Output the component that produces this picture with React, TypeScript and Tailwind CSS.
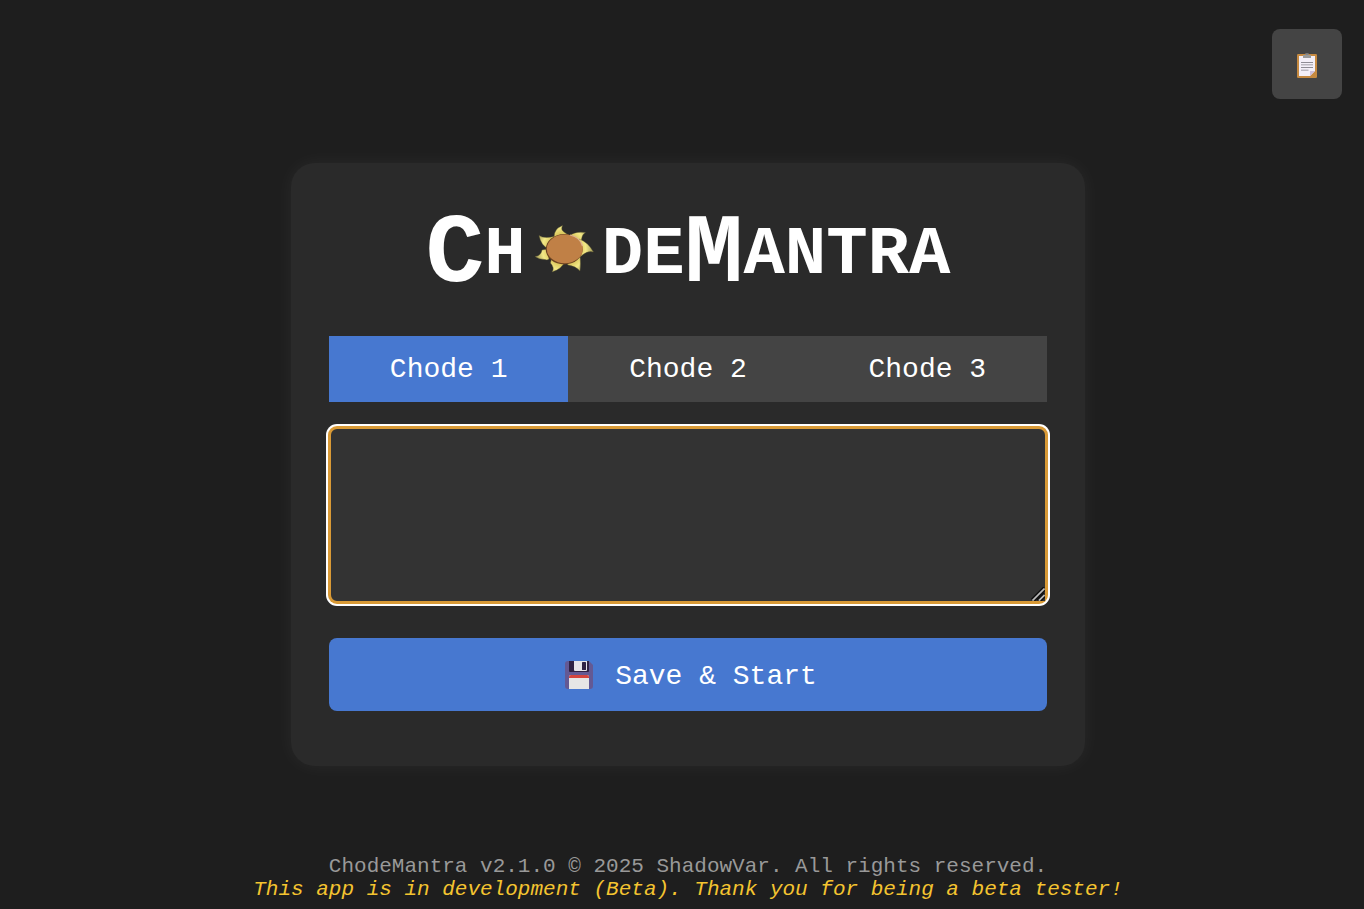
import { useState } from "react";

function ClipboardIcon() {
  return (
    <svg viewBox="0 0 20 26" className="h-[26px] w-5" aria-hidden="true">
      <rect x="0" y="2" width="20" height="24" rx="1.2" fill="#c68a41" />
      <path d="M2 4h16v15l-5 5H2z" fill="#f3eff8" />
      <path d="M13 24v-5h5z" fill="#cdc0dc" />
      <path d="M6 3h2.5V1.5Q8.700 1 10 1t1.500.5V3H14v3H6z" fill="#999" />
      <path d="M8.500 2.500V1.500Q8.700 1 10 1t1.500.5v1z" fill="#737373" />
      <path d="M4 10.500h12M4 15.500h12" stroke="#8e8c95" strokeWidth="1" />
      <path d="M4 12.800h12M4 18.200h7.500" stroke="#bcb9c2" strokeWidth="1.500" />
    </svg>
  );
}

function FloppyIcon() {
  return (
    <svg viewBox="0 0 28 28" className="h-7 w-7" aria-hidden="true">
      <path d="M3 0h21l4 4v21a3 3 0 0 1-3 3H3a3 3 0 0 1-3-3V3a3 3 0 0 1 3-3z" fill="#635994" />
      <path d="M4 0h20v10q0 1-1 1H5q-1 0-1-1z" fill="#2f2144" />
      <path d="M9 0h13v9q0 1-1 1H10q-1 0-1-1z" fill="#e7e4e9" />
      <rect x="17" y="1" width="4" height="8" rx=".6" fill="#2f2144" />
      <path d="M4 28V16q0-2 2-2h16q2 0 2 2v12z" fill="#e6e6e6" />
      <path d="M4 17v-1q0-2 2-2h16q2 0 2 2v1z" fill="#d4453f" />
    </svg>
  );
}

function SunLogo() {
  return (
    <svg viewBox="0 0 60 48" className="h-12 w-[60px]" role="img" aria-label="o">
      <defs>
        <radialGradient id="flame" gradientUnits="userSpaceOnUse" cx="30" cy="24" r="29">
          <stop offset=".55" stopColor="#dcc95f" />
          <stop offset=".75" stopColor="#f3e987" />
          <stop offset="1" stopColor="#a8a05c" />
        </radialGradient>
      </defs>
      <g fill="url(#flame)" stroke="#5b5631" strokeWidth=".4">
        <path d="M20 12Q20 4 28.500.5Q26.500 5 30 7L37 12L22 16z" />
        <path d="M35 11Q41 6 51.500 7.500Q47 10 47.500 17L44 23z" />
        <path d="M45 14Q54 17 59.500 27Q53 25 45 33L42 25z" />
        <path d="M45.500 27Q47 37 46 46Q42 41 34 40L30 34z" />
        <path d="M32 35Q28 44 18 47Q21 43 16.500 38L18 31z" />
        <path d="M14 24L15 34Q13 35.500 11 34.500Q5 34.500 1 31.500Q7 31 8 25z" />
        <path d="M15 24Q7 21 5 10.500Q10 14 20 11.500L23 17z" />
      </g>
      <ellipse cx="30.200" cy="24.300" rx="18.500" ry="15.200" fill="#6c4321" />
      <ellipse cx="30.800" cy="23.900" rx="18" ry="14.400" fill="#c08046" />
      <path d="M36 10Q46 12 48.500 21" fill="none" stroke="#dfb492" strokeWidth="1.200" />
    </svg>
  );
}

function ResizeGrip() {
  return (
    <svg viewBox="0 0 14 14" className="pointer-events-none absolute right-0.5 bottom-0.5 h-3.5 w-3.5" aria-hidden="true">
      <path d="M1 14L14 1V14z" fill="#333" />
      <path d="M.5 12.500L13 0M6 13L13 6" stroke="#111" strokeWidth="1.700" />
      <path d="M1.500 13.500L13.500 1.500M8 13.500L13.500 8" stroke="#bbb" strokeWidth="1.700" />
      <path d="M3.500 14L14 3.500M10 14l4-4" stroke="#111" strokeWidth="1.200" />
    </svg>
  );
}

const tabs = ["Chode 1", "Chode 2", "Chode 3"];

export default function App() {
  const [active, setActive] = useState(0);
  const [notes, setNotes] = useState(["", "", ""]);

  return (
    <div className="flex min-h-screen flex-col bg-[#1e1e1e] font-['Courier_New','Liberation_Mono',monospace] text-white">
      <header className="flex justify-end pt-[29px] pr-[22px]">
        <button type="button" aria-label="Clipboard" className="flex h-[70px] w-[70px] items-center justify-center rounded-lg bg-[#444] pt-0.5">
          <ClipboardIcon />
        </button>
      </header>

      <main className="mt-16 flex justify-center pl-3">
        <section className="flex w-full max-w-[794px] flex-col rounded-3xl bg-[#2a2a2a] px-[38px] pt-[38px] pb-[55px] shadow-[0_0_20px_rgba(255,255,255,0.05)]">
          <h1 className="flex h-24 items-center justify-center pt-3 text-[69px] leading-none font-bold">
            <span className="text-[98px]">C</span>
            <span>H</span>
            <span className="mx-2 pb-3">
              <SunLogo />
            </span>
            <span>DE</span>
            <span className="text-[98px]">M</span>
            <span>ANTRA</span>
          </h1>

          <div role="tablist" className="mt-[39px] grid grid-cols-3 bg-[#444]">
            {tabs.map((tab, i) => (
              <button
                key={tab}
                type="button"
                role="tab"
                aria-selected={active === i}
                onClick={() => setActive(i)}
                className={
                  active === i
                    ? "h-[66px] bg-[#4778d0] pt-0.5 text-[28px] leading-8"
                    : "h-[66px] bg-[#444] pt-0.5 text-[28px] leading-8"
                }
              >
                {tab}
              </button>
            ))}
          </div>

          <div className="relative mt-[25px]">
            <textarea
              aria-label={tabs[active]}
              value={notes[active]}
              onChange={(e) => setNotes(notes.map((n, i) => (i === active ? e.target.value : n)))}
              className="block h-[176px] w-full resize-y rounded-lg border-2 border-[#d99a36] bg-[#333] p-4 text-[28px] leading-8 shadow-[0_0_0_1px_#d99a36,0_0_0_3px_#fff] outline-none"
            />
            <ResizeGrip />
          </div>

          <button type="button" className="mt-[35px] flex h-[73px] items-center justify-center gap-[22px] rounded-lg bg-[#4778d0] pl-1.5 text-[28px] leading-8">
            <FloppyIcon />
            <span className="pt-1">Save &amp; Start</span>
          </button>
        </section>
      </main>

      <footer className="mt-auto pt-8 pb-2 pl-3 text-center text-[21px] leading-[23px]">
        <p className="text-[#999]">ChodeMantra v2.1.0 © 2025 ShadowVar. All rights reserved.</p>
        <p className="text-[#f4c430] italic">This app is in development (Beta). Thank you for being a beta tester!</p>
      </footer>
    </div>
  );
}
